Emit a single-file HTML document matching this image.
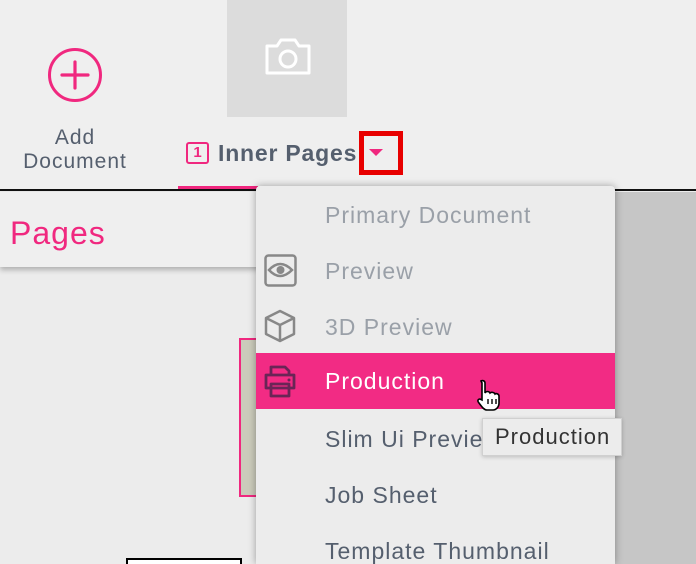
<!DOCTYPE html>
<html><head><style>
*{margin:0;padding:0;box-sizing:border-box}
html,body{width:696px;height:564px;overflow:hidden}
body{background:#ececec;font-family:"Liberation Sans",sans-serif;position:relative}
.a{position:absolute}
.mi{position:absolute;left:0;width:359px;height:56px;font-size:23px;letter-spacing:1px;line-height:56px;padding-left:69px;color:#555f6e;white-space:nowrap}
.dis{color:#9aa0a8}
</style></head><body>
<div class="a" style="left:0;top:0;width:696px;height:190px;background:#efefef"></div>
<div class="a" style="left:227px;top:0;width:120px;height:117px;background:#dcdcdc"></div>
<svg class="a" style="left:263px;top:36px" width="50" height="42" viewBox="0 0 50 42"><path d="M4 10h10l4-6h14l4 6h10v27H4z" fill="none" stroke="#fff" stroke-width="3" stroke-linejoin="round"/><circle cx="25" cy="23" r="8" fill="none" stroke="#fff" stroke-width="3"/></svg>
<svg class="a" style="left:47px;top:47px" width="56" height="56"><circle cx="28" cy="28" r="25.5" fill="none" stroke="#f0287f" stroke-width="3"/><path d="M28 15v26M15 28h26" stroke="#f0287f" stroke-width="3.2" stroke-linecap="round"/></svg>
<div class="a" style="left:0;width:150px;top:126px;text-align:center;font-size:21px;letter-spacing:1px;line-height:24px;color:#555f6e">Add<br>Document</div>
<div class="a" style="left:186px;top:142px;width:23px;height:22px;border:2px solid #f0287f;border-radius:3px;color:#f0287f;font-size:15px;font-weight:bold;text-align:center;line-height:18px">1</div>
<div class="a" style="left:218px;top:139px;font-size:23px;letter-spacing:.8px;font-weight:bold;color:#555f6e;line-height:28px;white-space:nowrap">Inner Pages</div>
<div class="a" style="left:359px;top:131px;width:44px;height:44px;border:5px solid #e80000"></div>
<div class="a" style="left:369px;top:149px;width:0;height:0;border-left:7px solid transparent;border-right:7px solid transparent;border-top:7px solid #f0287f"></div>
<div class="a" style="left:178px;top:186px;width:80px;height:4px;background:#f0287f"></div>
<div class="a" style="left:0;top:189px;width:696px;height:2px;background:#111"></div>
<div class="a" style="left:0;top:192px;width:270px;height:75px;background:#efefef;box-shadow:0 3px 5px rgba(0,0,0,.25)"></div>
<div class="a" style="left:10px;top:213px;font-size:32px;letter-spacing:1px;color:#f0287f;line-height:40px">Pages</div>
<div class="a" style="left:615px;top:192px;width:81px;height:372px;background:#c6c6c6"></div>
<div class="a" style="left:239px;top:338px;width:20px;height:159px;border:2px solid #f0287f;background:#cbcbbb"></div>
<div class="a" style="left:126px;top:558px;width:116px;height:10px;border:2px solid #000;background:#fff"></div>
<div class="a" style="left:256px;top:186px;width:359px;height:378px;overflow:hidden;background:#ececec;border-radius:4px 4px 0 0;box-shadow:0 0 8px rgba(0,0,0,.35)">
<div class="mi dis" style="top:1px">Primary Document</div>
<div class="mi dis" style="top:57px">Preview</div>
<svg class="a" style="left:8px;top:68px" width="33" height="33"><rect x="1.5" y="1.5" width="30" height="30" rx="3" fill="none" stroke="#888" stroke-width="2.5"/><path d="M5 16q11-12 23 0q-12 12-23 0z" fill="none" stroke="#888" stroke-width="2.5"/><circle cx="16.5" cy="16" r="4" fill="#888"/></svg>
<div class="mi dis" style="top:113px">3D Preview</div>
<svg class="a" style="left:7px;top:123px" width="34" height="34"><path d="M17 2L31 9v16L17 32 3 25V9z M3 9l14 7 14-7 M17 16v16" fill="none" stroke="#888" stroke-width="2.5" stroke-linejoin="round"/></svg>
<div class="mi" style="top:167px;background:#f22b84;color:#fff">Production</div>
<svg class="a" style="left:7px;top:178px" width="34" height="34"><path d="M8 10V3h14l4 4v3 M3 11h28v13H3z M8 20h18v12H8z" fill="none" stroke="#6a2556" stroke-width="2.8" stroke-linejoin="round"/><circle cx="26" cy="16" r="1.5" fill="#6a2556"/></svg>
<div class="mi" style="top:225px">Slim Ui Preview</div>
<div class="mi" style="top:281px">Job Sheet</div>
<div class="mi" style="top:337px">Template Thumbnail</div>
</div>
<div class="a" style="left:482px;top:418px;width:140px;height:38px;background:#ececec;border:1px solid #d0d0d0;box-shadow:0 1px 4px rgba(0,0,0,.2);font-size:22px;letter-spacing:1px;line-height:36px;padding-left:12px;color:#333;white-space:nowrap">Production</div>
<svg class="a" style="left:474px;top:378px" width="34" height="36"><path d="M7 3c2-1 4 0 4 2v10c1-2 4-2 5 0 1-1 4-1 5 1 1-1 4 0 4 2v7c0 4-3 7-6 7h-6c-3 0-5-3-8-7-2-2-1-4 1-4l2 1V5z" fill="#fff" stroke="#000" stroke-width="1.6"/><path d="M14 21v5M18 21v5M22 21v5" stroke="#000" stroke-width="1.4"/></svg>
</body></html>
